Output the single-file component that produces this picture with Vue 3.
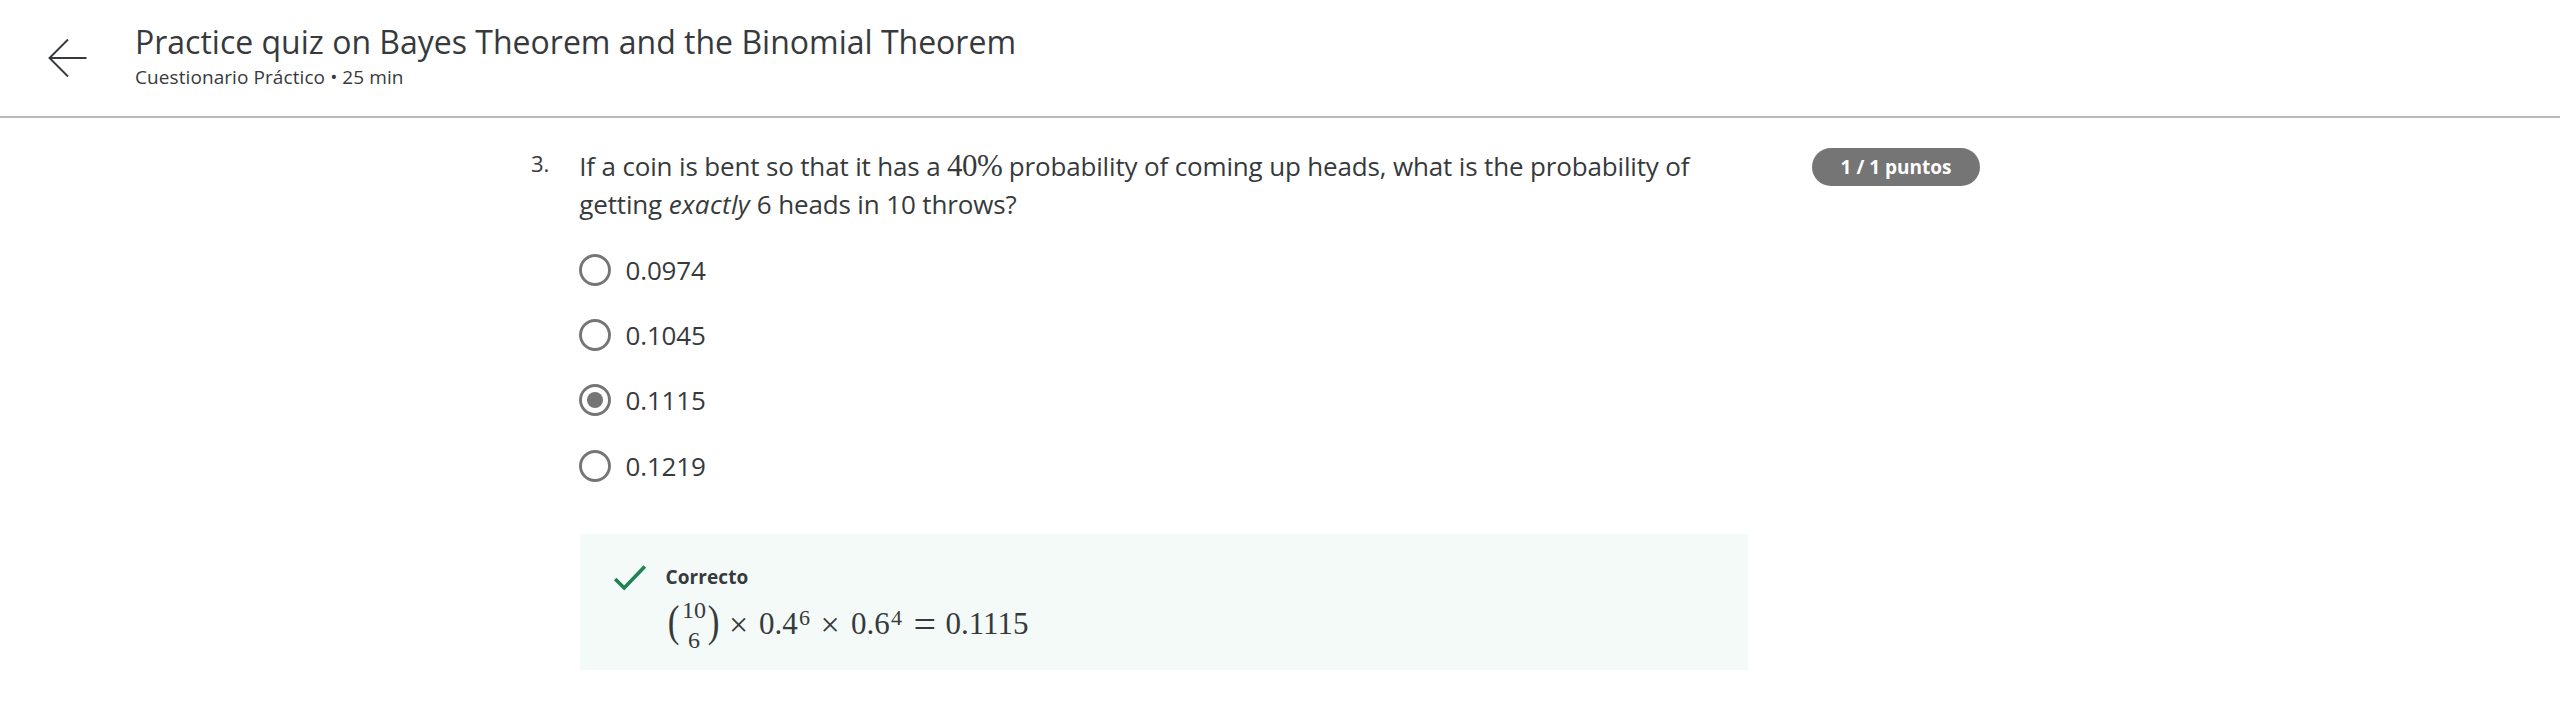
<script setup>
const options = [
  { value: '0.0974', checked: false },
  { value: '0.1045', checked: false },
  { value: '0.1115', checked: true },
  { value: '0.1219', checked: false },
]
</script>

<template>
  <div class="page">
    <header class="header">
      <svg class="back" width="40" height="40" viewBox="0 0 40 40" fill="none" stroke="#373a3c" stroke-width="1.9">
        <path d="M20 1.5 1.5 20 20 38.5M1.5 20H38.5" />
      </svg>
      <div class="heading">
        <h1 class="title">Practice quiz on Bayes Theorem and the Binomial Theorem</h1>
        <p class="subtitle">Cuestionario Práctico • 25 min</p>
      </div>
    </header>

    <main class="question">
      <div class="number">3.</div>
      <div class="body">
        <p class="prompt">
          <span class="line first">If a coin is bent so that it has a <span class="percent">40%</span> probability of coming up heads, what is the probability of</span>
          <span class="line second">getting <em>exactly</em> 6 heads in 10 throws?</span>
        </p>
        <div class="options">
          <label v-for="o in options" :key="o.value" class="option">
            <svg class="radio" width="32" height="32" viewBox="0 0 32 32">
              <circle cx="16" cy="16" r="14.5" fill="#fff" stroke="#757575" stroke-width="2.9" />
              <circle v-if="o.checked" cx="16" cy="16" r="8" fill="#757575" />
            </svg>
            <span class="value">{{ o.value }}</span>
          </label>
        </div>
        <section class="feedback">
          <svg class="check" width="34" height="28" viewBox="0 0 34 28" fill="none" stroke="#1f8354" stroke-width="3.6">
            <path d="M2.2 15 11.2 24 31.8 2.6" />
          </svg>
          <div class="result">
            <strong class="verdict">Correcto</strong>
            <div class="formula">
              <span class="paren">(</span>
              <span class="binom"><span>10</span><span>6</span></span>
              <span class="paren">)</span>
              <span class="times">×</span>
              <span class="base">0.4</span>
              <span class="sup">6</span>
              <span class="times second-times">×</span>
              <span class="base">0.6</span>
              <span class="sup">4</span>
              <span class="equals">=</span>
              <span>0.1115</span>
            </div>
          </div>
        </section>
      </div>
      <div class="points">1 / 1 puntos</div>
    </main>
  </div>
</template>

<style>
body { margin: 0; background: #fff; }
</style>

<style scoped>
.page {
  width: 2560px;
  height: 714px;
  overflow: hidden;
  background: #fff;
  color: #373a3c;
  font-family: "Open Sans", "Noto Sans", sans-serif;
}
.header {
  box-sizing: border-box;
  display: flex;
  height: 118px;
  padding-left: 48px;
  border-bottom: 2px solid #b9b9b9;
}
.back { flex: none; margin-top: 38px; }
.heading { margin-left: 47px; padding-top: 21px; }
.title {
  margin: 0;
  font-size: 32px;
  font-weight: 400;
  line-height: 42px;
  white-space: nowrap;
}
.subtitle { margin: 0; font-size: 19px; line-height: 29px; letter-spacing: 0.08px; white-space: nowrap; }
.question { display: flex; align-items: flex-start; padding-left: 531px; }
.number { width: 48px; margin-top: 28px; font-size: 22px; line-height: 34px; }
.body { width: 1169px; margin-left: 1px; padding-top: 29px; }
.prompt { margin: 0 0 0 -0.8px; font-size: 26px; line-height: 38px; }
.line { display: block; height: 38px; white-space: nowrap; }
.first { letter-spacing: -0.155px; }
.second { letter-spacing: -0.14px; }
.second em { letter-spacing: 0.35px; }
.percent { font-family: "Liberation Serif", serif; font-size: 31px; line-height: 30px; letter-spacing: -0.6px; }
.options { padding-top: 26px; }
.option { display: flex; height: 65.2px; }
.radio { flex: none; margin: 5px 0 0 -1.5px; }
.value { margin-left: 15px; font-size: 26px; line-height: 42px; letter-spacing: -0.15px; }
.feedback {
  box-sizing: border-box;
  display: flex;
  width: 1168px;
  height: 136px;
  margin-top: 24px;
  padding-left: 33px;
  background: #f3faf8;
}
.check { flex: none; margin-top: 30px; }
.result { margin-left: 18.5px; padding-top: 29px; }
.verdict { display: block; font-size: 19px; font-weight: 700; line-height: 29px; letter-spacing: 0.1px; }
.formula {
  display: flex;
  height: 60px;
  margin-top: 2px;
  font-family: "Liberation Serif", serif;
  font-size: 31px;
  line-height: 60px;
  white-space: nowrap;
}
.formula > span { flex: none; }
.paren { width: 16.5px; font-size: 44px; line-height: 56px; transform: scaleX(0.8); }
.binom {
  display: flex;
  flex-direction: column;
  width: 24px;
  padding-top: 1px;
  font-size: 24px;
  line-height: 30px;
  text-align: center;
}
.times { width: 30px; margin-left: 6.5px; font-size: 34px; line-height: 61px; }
.base { width: 40px; }
.sup { width: 11px; font-size: 22px; line-height: 47px; }
.second-times { width: 30.5px; margin-left: 10.5px; }
.equals { width: 32px; margin-left: 11.5px; font-size: 40px; line-height: 62px; }
.points {
  width: 168px;
  height: 38px;
  margin: 30px 0 0 63px;
  border-radius: 19px;
  background: #757575;
  color: #fff;
  font-size: 19px;
  font-weight: 700;
  line-height: 38px;
  text-align: center;
}
</style>
